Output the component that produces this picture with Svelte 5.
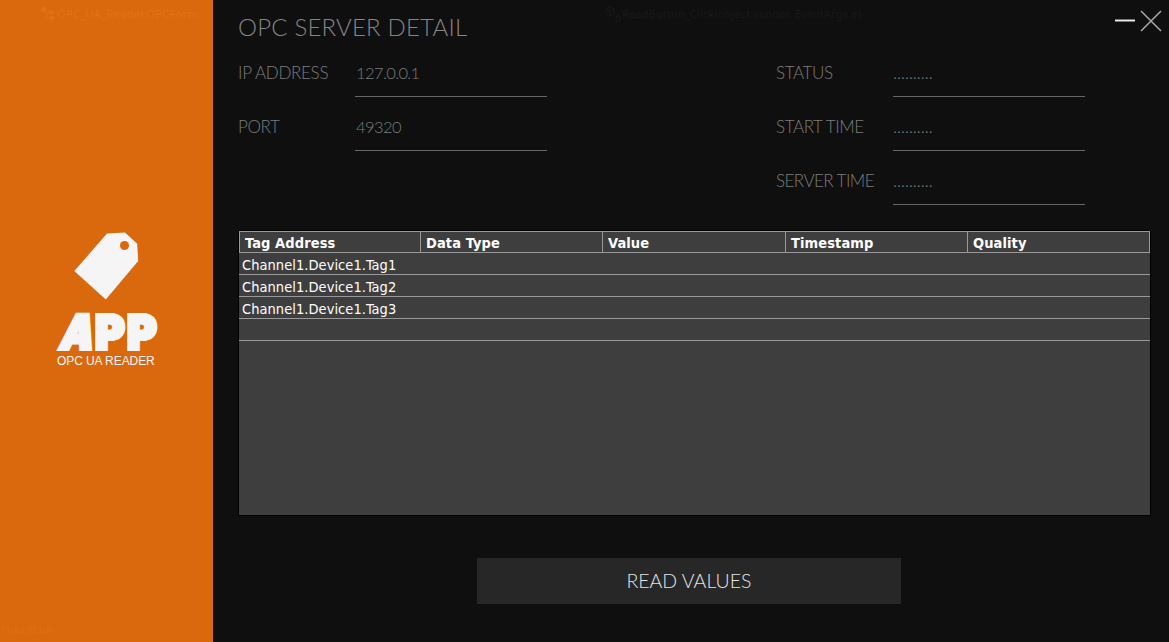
<script>
  const connection = [
    { label: 'IP ADDRESS', value: '127.0.0.1', fit: 'ip', valueFit: 'number' },
    { label: 'PORT', value: '49320', fit: 'port', valueFit: 'number' }
  ];
  const server = [
    { label: 'STATUS', value: '..........', fit: 'status', valueFit: 'dots' },
    { label: 'START TIME', value: '..........', fit: 'start', valueFit: 'dots' },
    { label: 'SERVER TIME', value: '..........', fit: 'server', valueFit: 'dots' }
  ];
  const columns = ['Tag Address', 'Data Type', 'Value', 'Timestamp', 'Quality'];
  const rows = ['Channel1.Device1.Tag1', 'Channel1.Device1.Tag2', 'Channel1.Device1.Tag3', ''];
</script>

{#snippet field(f)}
  <div class="field">
    <span class="label {f.fit}">{f.label}</span>
    <div class="value"><span class={f.valueFit}>{f.value}</span></div>
  </div>
{/snippet}

<div class="window">
  <div class="ghost ghost-class">
    <svg width="16" height="16" viewBox="0 0 16 16"><path d="M0 4l4-4 4 3-4 4zM9 6l2-2 4 3-3 2zM9 12l2-2 4 1-3 4z" fill="currentColor" /><path d="M6 6v6h4M7 7h4" fill="none" stroke="currentColor" /></svg>
    <span>OPC_UA_Reader.OPCForm</span>
  </div>
  <div class="ghost ghost-method">
    <svg width="16" height="16" viewBox="0 0 16 16" fill="none" stroke="currentColor"><path d="M5 1l4 2v5l-4 2-4-2V3zM1 3l4 2 4-2M5 5v5M11 11h4v4h-4zM12 11V9h2v2" /></svg>
    <span>ReadButton_Click(object sender, EventArgs e)</span>
  </div>
  <div class="ghost ghost-output">figuration</div>

  <aside>
    <svg class="tag" width="66" height="68" viewBox="0 0 66 68">
      <path d="M33 1.6L51 0.4L63.2 11.8L64.2 29L31.8 67.5L0.3 39Z" fill="#f5f5f5" />
      <circle cx="50.5" cy="13.5" r="4.5" fill="#da680c" />
    </svg>
    <div class="app"><span class="a">A</span><span class="p">P</span><span class="p">P</span></div>
    <div class="product">OPC UA READER</div>
  </aside>

  <main>
    <header>
      <h1>OPC SERVER DETAIL</h1>
      <div class="controls">
        <svg width="22" height="22" viewBox="0 0 22 22"><path d="M1 10.5h20" stroke="#777" stroke-width="3" /><path d="M1 10.5h20" stroke="#eee" stroke-width="1" /></svg>
        <svg width="22" height="22" viewBox="0 0 22 22"><path d="M1 1l20 20M21 1L1 21" stroke="#aaa" stroke-width="1.5" /></svg>
      </div>
    </header>
    <section class="details">
      <div class="group">{#each connection as f}{@render field(f)}{/each}</div>
      <div class="group">{#each server as f}{@render field(f)}{/each}</div>
    </section>
    <div class="grid">
      <div class="head">
        {#each columns as c}<div>{c}</div>{/each}
      </div>
      {#each rows as r}<div class="row"><span>{r}</span></div>{/each}
    </div>
    <button><span>READ VALUES</span></button>
  </main>
</div>

<style>
  :global(body) { margin: 0; overflow: hidden; background: #0f0f0f; }
  .window { position: relative; display: flex; width: 1169px; height: 642px; background: #0f0f0f; overflow: hidden; }
  aside { box-sizing: border-box; width: 213px; height: 642px; padding-top: 232px; background: #da680c; color: #f5f5f5; flex: none; }
  .tag { display: block; margin-left: 74px; }
  .app { display: flex; height: 39px; margin: 13px 0 2px 62px; font: 900 47px/38px Inter, sans-serif; -webkit-text-stroke: 4px #f5f5f5; stroke-linejoin: round; }
  .app span { display: block; transform-origin: 0 50%; }
  .app .a { width: 33px; transform: skewX(-13deg) scaleX(0.88); }
  .app .p { width: 32px; transform: scaleX(0.96); }
  .product { margin: 0 0 0 57px; font: 12px/14px "Liberation Sans", Arial, sans-serif; letter-spacing: -0.08px; white-space: nowrap; }
  main { box-sizing: border-box; width: 956px; padding-left: 25px; font-family: Lato, sans-serif; font-weight: 300; color: #7c7c7c; }
  header { display: flex; justify-content: space-between; height: 63px; }
  h1 { margin: 11px 0 0; font-size: 24px; line-height: 32px; font-weight: 300; letter-spacing: 0.2px; color: #858585; white-space: nowrap; }
  .controls { display: flex; gap: 4px; margin: 10px 7px 0 0; }
  .details { display: flex; height: 168px; }
  .group { width: 538px; }
  .group:last-child { width: 320px; }
  .field { display: flex; height: 54px; font-size: 17px; line-height: 19px; white-space: nowrap; }
  .label { width: 117px; letter-spacing: -0.4px; }
  .ip { letter-spacing: -0.3px; }
  .server { letter-spacing: -0.55px; }
  .value { box-sizing: border-box; width: 192px; height: 34px; border-bottom: 1px solid #666; }
  .number { margin-left: 1px; font-size: 16.5px; letter-spacing: -0.6px; }
  .grid { box-sizing: border-box; width: 913px; height: 286px; margin-top: -1px; border: 1px solid #000; background: #3e3e3e; color: #fff; font: 14.5px/23px "DejaVu Sans Condensed", Tahoma, sans-serif; }
  .head { box-sizing: border-box; display: grid; grid-template-columns: 182px 182px 183px 182px 182px; height: 22px; border-top: 1px solid #999; border-bottom: 1px solid #999; font-weight: 700; line-height: 22px; letter-spacing: 0.1px; }
  .head div { box-sizing: border-box; height: 20px; border-right: 1px solid #999; padding-left: 5px; }
  .head div:first-child { border-left: 1px solid #999; }
  .row { box-sizing: border-box; height: 22px; padding-left: 3px; border-bottom: 1px solid #999; line-height: 24px; letter-spacing: 0.05px; }
  button { display: block; width: 424px; height: 46px; margin: 42px 0 0 239px; padding: 0; border: 0; background: #272727; color: #e4e4e4; font: 300 19.5px/46px Lato, sans-serif; }
  .ghost { position: absolute; z-index: 1; display: flex; gap: 1px; white-space: nowrap; font: 11px/16px "Noto Sans", sans-serif; }
  .ghost-class { left: 40px; top: 6px; color: #e17316; letter-spacing: 0.35px; }
  .ghost-method { left: 605px; top: 6px; color: #191919; letter-spacing: 0.15px; }
  .ghost-output { left: 0; top: 622px; color: #dc7010; font: 11px/16px "DejaVu Sans Mono", monospace; letter-spacing: -1.3px; }
</style>
